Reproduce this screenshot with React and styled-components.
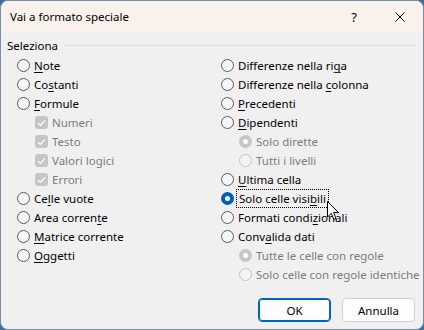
import React from 'react';
import styled, { createGlobalStyle, css } from 'styled-components';

const GlobalStyle = createGlobalStyle`
  html, body {
    margin: 0;
    padding: 0;
    background: #3d6c9f;
  }
  body {
    font-family: "Segoe UI", "Noto Sans", "Liberation Sans", sans-serif;
    font-size: 11.5px;
    color: #000;
  }
`;

const Window = styled.div`
  position: relative;
  width: 424px;
  height: 330px;
  box-sizing: border-box;
  border: 1px solid #7b8fa6;
  border-radius: 8px;
  overflow: hidden;
  background: #f0f0f0;
  display: flex;
  flex-direction: column;
`;

const TitleBar = styled.div`
  height: 31px;
  flex: none;
  background: #f9f1ec;
  display: flex;
  align-items: center;
  padding-left: 9px;
`;

const Title = styled.div`
  flex: 1;
  font-size: 11.5px;
`;

const TitleButton = styled.div`
  width: 46px;
  height: 31px;
  display: flex;
  align-items: center;
  justify-content: center;
  font-size: 13px;
`;

const Body = styled.div`
  flex: 1;
  padding: 4px 7px 0 6px;
  display: flex;
  flex-direction: column;
`;

const GroupHeader = styled.div`
  display: flex;
  align-items: center;
  gap: 6px;
  height: 18px;
`;

const GroupLine = styled.div`
  flex: 1;
  height: 1px;
  background: #dcdcdc;
`;

const Columns = styled.div`
  display: grid;
  grid-template-columns: 204px 1fr;
  padding-left: 10px;
  margin-top: 2px;
`;

const Column = styled.div`
  display: flex;
  flex-direction: column;
`;

const Row = styled.div`
  height: 19px;
  display: flex;
  align-items: center;
  gap: 4px;
  padding-left: ${p => (p.$indent ? 18 : 0)}px;
  color: ${p => (p.$disabled ? '#7c7c7c' : '#000')};
  white-space: nowrap;
`;

const Circle = styled.span`
  width: 13px;
  height: 13px;
  box-sizing: border-box;
  border-radius: 50%;
  flex: none;
  display: flex;
  align-items: center;
  justify-content: center;
  border: 1px solid #5a5a5a;
  background: #f6f6f6;
  ${p => p.$disabled && css`
    border-color: #c4c4c4;
    background: #f3f3f3;
  `}
  ${p => p.$checked && css`
    border: none;
    background: ${p.$disabled ? '#c6c6c6' : '#005fb8'};
    &::after {
      content: '';
      width: 5px;
      height: 5px;
      border-radius: 50%;
      background: #fff;
    }
  `}
`;

const Box = styled.span`
  width: 13px;
  height: 13px;
  border-radius: 3px;
  background: #c5c5c5;
  flex: none;
  display: flex;
  align-items: center;
  justify-content: center;
`;

const Label = styled.span`
  padding: 1px 1px;
  margin-left: -1px;
  ${p => p.$focus && css`
    outline: 1px dotted #000;
    outline-offset: 0;
    padding: 1px 2px;
  `}
  u {
    text-decoration: underline;
    text-underline-offset: 2px;
  }
`;

const Footer = styled.div`
  display: flex;
  justify-content: flex-end;
  gap: 11px;
  padding: 0 1px 7px 0;
  margin-top: auto;
`;

const Button = styled.button`
  width: 73px;
  height: 24px;
  box-sizing: border-box;
  border-radius: 4px;
  background: #fdfdfd;
  font-family: inherit;
  font-size: 11.5px;
  color: #000;
  border: 1px solid ${p => (p.$primary ? '#0067c0' : '#d0d0d0')};
  ${p => p.$primary && css`
    box-shadow: inset 0 0 0 1px #0067c0;
  `}
`;

const Cursor = styled.svg`
  position: absolute;
  left: 326px;
  top: 200px;
`;

const Check = () => (
  <svg width="9" height="8" viewBox="0 0 9 8">
    <path d="M1 4.2 L3.4 6.4 L8 1.4" fill="none" stroke="#fff" strokeWidth="1.2" />
  </svg>
);

const Radio = ({ checked, disabled, indent, focus, children }) => (
  <Row $disabled={disabled} $indent={indent}>
    <Circle $checked={checked} $disabled={disabled} />
    <Label $focus={focus}>{children}</Label>
  </Row>
);

const CheckRow = ({ children }) => (
  <Row $disabled $indent>
    <Box><Check /></Box>
    <Label>{children}</Label>
  </Row>
);

export default function App() {
  return (
    <>
      <GlobalStyle />
      <Window>
        <TitleBar>
          <Title>Vai a formato speciale</Title>
          <TitleButton>?</TitleButton>
          <TitleButton>
            <svg width="10" height="10" viewBox="0 0 10 10">
              <path d="M0.5 0.5 L9.5 9.5 M9.5 0.5 L0.5 9.5" stroke="#000" strokeWidth="1" />
            </svg>
          </TitleButton>
        </TitleBar>
        <Body>
          <GroupHeader>
            <span>Seleziona</span>
            <GroupLine />
          </GroupHeader>
          <Columns>
            <Column>
              <Radio><u>N</u>ote</Radio>
              <Radio>Co<u>s</u>tanti</Radio>
              <Radio><u>F</u>ormule</Radio>
              <CheckRow>Numeri</CheckRow>
              <CheckRow>Testo</CheckRow>
              <CheckRow>Valori logici</CheckRow>
              <CheckRow>Errori</CheckRow>
              <Radio>Ce<u>l</u>le vuote</Radio>
              <Radio>Area corren<u>t</u>e</Radio>
              <Radio><u>M</u>atrice corrente</Radio>
              <Radio><u>O</u>ggetti</Radio>
            </Column>
            <Column>
              <Radio>Differenze nella ri<u>g</u>a</Radio>
              <Radio>Differenze nella <u>c</u>olonna</Radio>
              <Radio><u>P</u>recedenti</Radio>
              <Radio><u>D</u>ipendenti</Radio>
              <Radio indent disabled checked>Solo dirette</Radio>
              <Radio indent disabled>Tutti i livelli</Radio>
              <Radio><u>U</u>ltima cella</Radio>
              <Radio checked focus>Solo celle visi<u>b</u>ili</Radio>
              <Radio>Formati condi<u>z</u>ionali</Radio>
              <Radio>Conv<u>a</u>lida dati</Radio>
              <Radio indent disabled checked>Tutte le celle con regole</Radio>
              <Radio indent disabled>Solo celle con regole identiche</Radio>
            </Column>
          </Columns>
          <Footer>
            <Button $primary>OK</Button>
            <Button>Annulla</Button>
          </Footer>
        </Body>
        <Cursor width="13" height="20" viewBox="0 0 13 20">
          <path d="M0.5 0.5 L0.5 16 L4.3 12.4 L6.8 18.4 L9 17.4 L6.6 11.6 L11.6 11.6 Z" fill="#fff" stroke="#000" strokeWidth="1" />
        </Cursor>
      </Window>
    </>
  );
}
